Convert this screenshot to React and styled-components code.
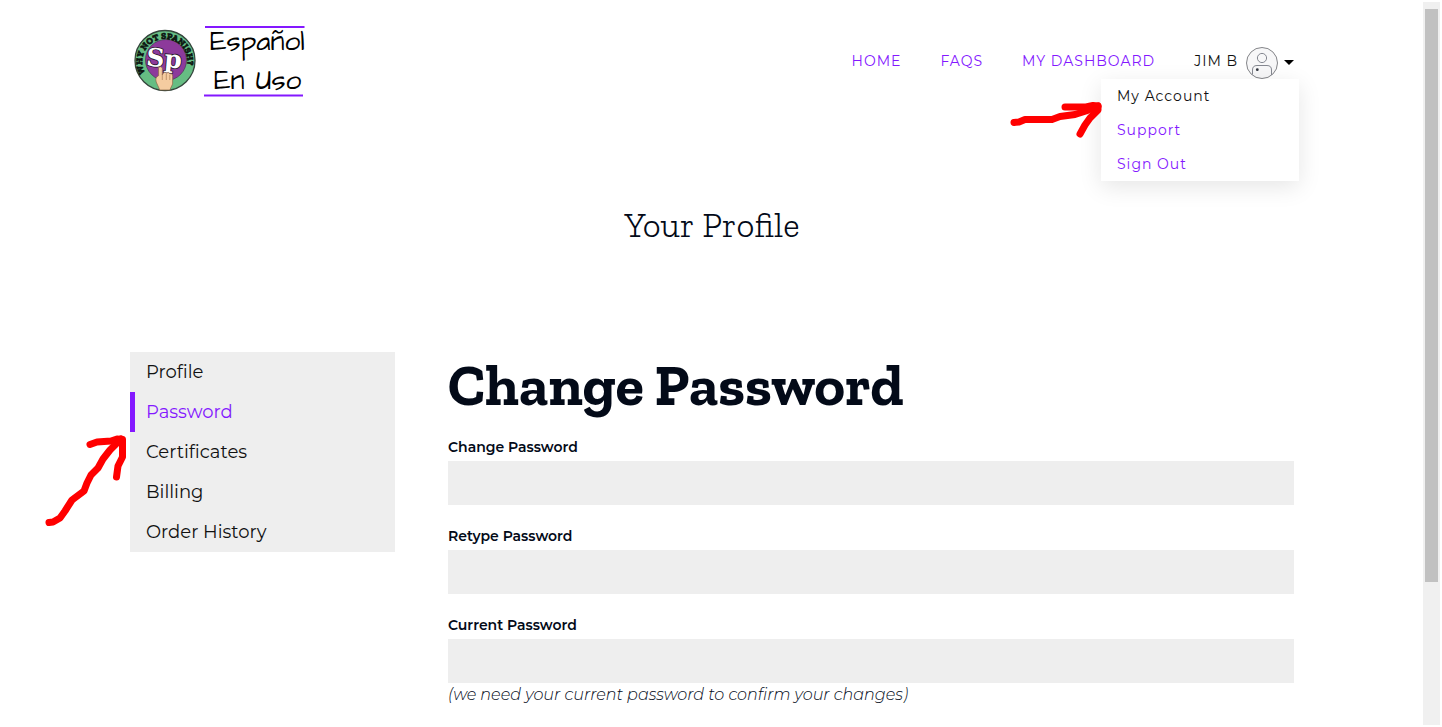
import React from 'react';
import styled, { createGlobalStyle, ThemeProvider } from 'styled-components';

const theme = {
  accent: '#8418ff',
  ink: '#030a18',
  text: '#111111',
  panel: '#eeeeee',
  mark: '#ff0000',
  sans: 'Montserrat, Inter, "Liberation Sans", sans-serif',
  slab: '"Zilla Slab", "DejaVu Serif", serif',
};

const GlobalStyle = createGlobalStyle`
  *, *::before, *::after { box-sizing: border-box; }
  body {
    margin: 0;
    background: #ffffff;
    color: ${theme.text};
    font-family: ${theme.sans};
    overflow: hidden;
  }
  a { text-decoration: none; }
  h1, h2, p, ul { margin: 0; padding: 0; }
  ul { list-style: none; }
`;

const Window = styled.div`
  display: flex;
  height: 100vh;
  padding: 0 2px 2px 0;
  overflow: hidden;
`;

const Page = styled.div`
  flex: 1;
  min-width: 0;
  padding: 0 129px 0 130px;
`;

const ScrollTrack = styled.div`
  flex: none;
  width: 17px;
  margin-top: 2px;
  padding: 7px 2px 0;
  background: #f0f0f0;
`;

const ScrollThumb = styled.div`
  height: 80%;
  background: #c1c1c1;
`;

const Header = styled.header`
  display: flex;
  justify-content: space-between;
  align-items: flex-start;
  padding: 10px 0 0 4px;
`;

const LogoLink = styled.a`
  display: block;
  svg { display: block; }
`;

const Nav = styled.nav`
  display: flex;
  align-items: center;
  gap: 39px;
  margin-top: 36px;
  height: 33px;
`;

const NavLink = styled.a`
  color: ${({ theme }) => theme.accent};
  font-size: 14px;
  line-height: 20px;
  letter-spacing: 1px;
  text-transform: uppercase;
  padding-bottom: 3px;
`;

const Account = styled.div`
  position: relative;
`;

const AccountButton = styled.button`
  display: flex;
  align-items: center;
  height: 33px;
  padding: 0;
  border: 0;
  background: none;
  color: ${({ theme }) => theme.text};
  font: inherit;
  font-size: 14px;
  line-height: 20px;
  letter-spacing: 1px;
  svg { display: block; }
`;

const AccountName = styled.span`
  padding: 0 8px 3px 0;
`;

const Caret = styled.span`
  margin-left: 6px;
  border: 5px solid transparent;
  border-top-color: #000000;
  border-bottom: 0;
`;

const Menu = styled.div`
  position: absolute;
  top: 33px;
  right: -5px;
  width: 198px;
  background: #ffffff;
  box-shadow: 0 6px 22px rgba(0, 0, 0, 0.1);
`;

const MenuLink = styled.a`
  display: block;
  padding: 7px 16px;
  color: ${({ theme, $current }) => ($current ? theme.text : theme.accent)};
  font-size: 14px;
  line-height: 20px;
  letter-spacing: 1px;
`;

const MenuArrow = styled.svg`
  position: absolute;
  top: 22px;
  left: -92px;
`;

const PageTitle = styled.h2`
  margin-top: 99px;
  color: ${({ theme }) => theme.ink};
  font-family: ${({ theme }) => theme.slab};
  font-size: 35px;
  font-weight: 300;
  line-height: 44px;
  text-align: center;
`;

const Columns = styled.div`
  display: flex;
  align-items: flex-start;
  gap: 53px;
  margin-top: 105px;
`;

const Sidebar = styled.ul`
  flex: none;
  width: 265px;
  background: ${({ theme }) => theme.panel};
`;

const SideItem = styled.li`
  position: relative;
`;

const SideLink = styled.a`
  display: block;
  padding-left: ${({ $current }) => ($current ? '11px' : '16px')};
  border-left: ${({ theme, $current }) => ($current ? `5px solid ${theme.accent}` : '0')};
  color: ${({ theme, $current }) => ($current ? theme.accent : theme.text)};
  font-size: 18px;
  line-height: 40px;
`;

const SideArrow = styled.svg`
  position: absolute;
  top: 41px;
  left: -86px;
`;

const Form = styled.form`
  flex: 1;
  min-width: 0;
`;

const Heading = styled.h1`
  margin-bottom: 19px;
  color: ${({ theme }) => theme.ink};
  font-family: ${({ theme }) => theme.slab};
  font-size: 58px;
  font-weight: 700;
  line-height: 66px;
  white-space: nowrap;
`;

const Field = styled.div`
  margin-bottom: 21px;
`;

const Label = styled.label`
  display: block;
  padding-bottom: 4px;
  color: ${({ theme }) => theme.ink};
  font-size: 14px;
  font-weight: 600;
  line-height: 20px;
`;

const Input = styled.input`
  display: block;
  width: 100%;
  height: 44px;
  padding: 0 12px;
  border: 0;
  border-radius: 0;
  background: ${({ theme }) => theme.panel};
  font: inherit;
`;

const Hint = styled.p`
  color: ${({ theme }) => theme.ink};
  font-size: 16px;
  font-style: italic;
  font-weight: 300;
  line-height: 24px;
`;

function Logo() {
  return (
    <svg width="178" height="94" viewBox="134 10 178 94" role="img" aria-label="Español En Uso">
      <circle cx="165" cy="60.5" r="30" fill="#66bd83" stroke="#34453c" strokeWidth="1.3" />
      <circle cx="166" cy="60" r="20.5" fill="#8d3a9b" stroke="#4b3555" strokeWidth="0.7" />
      <path id="ring" d="M145.5 73 A22.5 22.5 0 1 1 182 76" fill="none" />
      <text fontFamily="'Zilla Slab', 'DejaVu Serif', serif" fontSize="9" fontWeight="700" fill="#0c1410" stroke="#0c1410" strokeWidth="0.6">
        <textPath href="#ring">WHY NOT SPANISH?</textPath>
      </text>
      <text
        x="164"
        y="67"
        textAnchor="middle"
        transform="rotate(5 164 60)"
        fontFamily="'DejaVu Serif', serif"
        fontSize="25"
        fontWeight="700"
        fill="#ffffff"
        stroke="#24152a"
        strokeWidth="1.6"
        paintOrder="stroke"
      >
        Sp
      </text>
      <path
        d="M158.5 67.5 Q160.8 65.8 162.3 67.8 V75 Q164 70.8 166.3 73.2 Q168.8 71.2 169.8 74 Q172.8 72.6 172.6 76.5 V84 L169.8 90 H159.8 L156.2 82 Q154.8 77 158.6 75.7 Z"
        fill="#f5cca0"
        stroke="#8b6646"
        strokeWidth="0.7"
      />
      <path d="M162.3 74.5 V80 M166.3 74 V80 M169.8 75 V80" stroke="#a77c55" strokeWidth="0.7" fill="none" />
      <path d="M205 27 H304.5 M204 95.5 H303" stroke="#8418ff" strokeWidth="2" />
      <g fontFamily="'Architects Daughter', 'Open Sans', sans-serif" fontSize="28" fill="#000000">
        <text x="210" y="50">Español</text>
        <text x="214" y="89">En Uso</text>
      </g>
    </svg>
  );
}

function Avatar() {
  return (
    <svg width="32" height="32" viewBox="0 0 32 32" fill="none" stroke="#858891" aria-hidden="true">
      <circle cx="16" cy="16" r="15.5" fill="#f7f7f8" stroke="#65666b" strokeWidth="0.8" />
      <circle cx="16" cy="11" r="4.6" />
      <path d="M6.5 27.5 V23 Q6.5 18.5 11 18.5 H21 Q25.5 18.5 25.5 23 V28" />
      <circle cx="11.3" cy="22.7" r="1.4" fill="#333740" stroke="none" />
    </svg>
  );
}

const sideLinks = ['Profile', 'Password', 'Certificates', 'Billing', 'Order History'];

const fields = [
  { id: 'new-password', label: 'Change Password' },
  { id: 'retype-password', label: 'Retype Password' },
  { id: 'current-password', label: 'Current Password', hint: '(we need your current password to confirm your changes)' },
];

const stroke = { fill: 'none', stroke: theme.mark, strokeWidth: 7, strokeLinecap: 'round', strokeLinejoin: 'round' };

export default function App() {
  return (
    <ThemeProvider theme={theme}>
      <GlobalStyle />
      <Window>
        <Page>
          <Header>
            <LogoLink href="#home"><Logo /></LogoLink>
            <Nav>
              <NavLink href="#home">Home</NavLink>
              <NavLink href="#faqs">FAQs</NavLink>
              <NavLink href="#dashboard">My Dashboard</NavLink>
              <Account>
                <AccountButton type="button" aria-expanded="true">
                  <AccountName>JIM B</AccountName>
                  <Avatar />
                  <Caret />
                </AccountButton>
                <Menu>
                  <MenuLink href="#account" $current>My Account</MenuLink>
                  <MenuLink href="#support">Support</MenuLink>
                  <MenuLink href="#signout">Sign Out</MenuLink>
                  <MenuArrow width="94" height="38" viewBox="1009 101 94 38" aria-hidden="true">
                    <path {...stroke} d="M1014 122.5 L1019 122 L1025 119.5 H1052 L1060 116.5 L1075 114.5 L1086 111 L1098 106" />
                    <path {...stroke} d="M1065 107 H1086 L1093 105.5 L1098 106 L1098 110 L1090 118 L1085 125 L1080 134" />
                  </MenuArrow>
                </Menu>
              </Account>
            </Nav>
          </Header>

          <PageTitle>Your Profile</PageTitle>

          <Columns>
            <Sidebar>
              {sideLinks.map((name) => (
                <SideItem key={name}>
                  <SideLink href="#section" $current={name === 'Password'}>{name}</SideLink>
                  {name === 'Password' && (
                    <SideArrow width="86" height="96" viewBox="44 433 86 96" aria-hidden="true">
                      <path {...stroke} d="M49 522.5 L53 522 L60 518 L65 511 L72 500 L84 491 L87 483 L91 475 L98 468 L103 459 L110 450 L121 439" />
                      <path {...stroke} d="M90 444.5 L97 442 L111 441 L117 439 L122.5 439.5 L122.5 457 L118 466 L116.5 477" />
                    </SideArrow>
                  )}
                </SideItem>
              ))}
            </Sidebar>

            <Form>
              <Heading>Change Password</Heading>
              {fields.map(({ id, label, hint }) => (
                <Field key={id}>
                  <Label htmlFor={id}>{label}</Label>
                  <Input id={id} type="password" />
                  {hint && <Hint>{hint}</Hint>}
                </Field>
              ))}
            </Form>
          </Columns>
        </Page>
        <ScrollTrack aria-hidden="true"><ScrollThumb /></ScrollTrack>
      </Window>
    </ThemeProvider>
  );
}
